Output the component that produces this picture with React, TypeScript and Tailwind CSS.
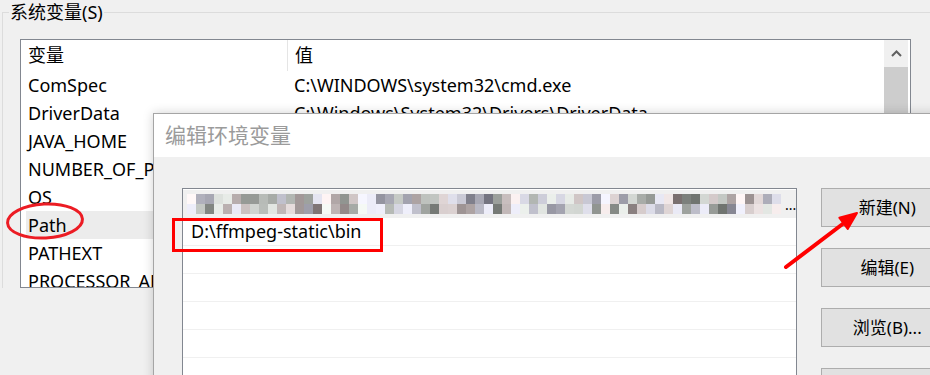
import React from "react";

// values further down are hidden behind the dialog
const vars = [
  { name: "ComSpec", value: "C:\\WINDOWS\\system32\\cmd.exe" },
  { name: "DriverData", value: "C:\\Windows\\System32\\Drivers\\DriverData" },
  { name: "JAVA_HOME", value: "" },
  { name: "NUMBER_OF_PROCESSORS", value: "" },
  { name: "OS", value: "" },
  { name: "Path", value: "" },
  { name: "PATHEXT", value: "" },
  { name: "PROCESSOR_ARCHITECTURE", value: "" },
];

// pixelated (blurred) path entry
const Mosaic = () => {
  let seed = 7;
  const rnd = () => {
    seed = (seed * 16807) % 2147483647;
    return seed / 2147483647;
  };
  const cells: { x: number; y: number; c: string }[] = [];
  for (let col = 0; col < 66; col++) {
    const gap = rnd() < 0.08;
    for (let row = 0; row < 2; row++) {
      let v = gap ? 235 + Math.floor(rnd() * 15) : 145 + Math.floor(rnd() * 95);
      if (!gap && rnd() < 0.12) v = 110 + Math.floor(rnd() * 30);
      const tint = Math.floor(rnd() * 3);
      const r = Math.min(255, v + (tint === 0 ? 10 : 0));
      const g = Math.min(255, v + (tint === 1 ? 4 : 0));
      const b = Math.min(255, v + (tint === 2 ? 12 : 0));
      cells.push({ x: col * 9, y: row * 10, c: `rgb(${r},${g},${b})` });
    }
  }
  return (
    <svg width="596" height="22" viewBox="0 0 596 22">
      {cells.map((c, i) => (
        <rect key={i} x={c.x} y={c.y + 1} width="9" height="10" fill={c.c} />
      ))}
    </svg>
  );
};

const App = () => {
  return (
    <div className="relative w-[930px] h-[375px] overflow-hidden bg-[#f0f0f0] text-black font-['Noto_Sans','Noto_Sans_CJK_SC',sans-serif]">
      <fieldset className="ml-[2px] border-l border-t border-[#dcdcdc]">
        <legend className="ml-[6px] px-px text-[18px] leading-[24px]">系统变量(S)</legend>
        <div className="mt-[15px] ml-[17px] w-[891px] h-[249px] border border-[#828790] bg-white flex pr-[2px] overflow-hidden">
          <div className="w-[863px] text-[18px]">
            <div className="h-[31px] pl-[5px] flex items-center">
              <div className="w-[262px] h-full pl-[2px] flex items-center border-r border-[#e5e5e5]">变量</div>
              <div className="pl-[7px]">值</div>
            </div>
            {vars.map((v) => (
              <div key={v.name} className="h-[28px] pl-[5px]">
                <div className={`flex h-full items-center ${v.name === "Path" ? "bg-[#ececec]" : ""}`}>
                  <div className="w-[262px] pl-[2px] whitespace-nowrap overflow-hidden">{v.name}</div>
                  <div className="pl-[6px] whitespace-nowrap">{v.value}</div>
                </div>
              </div>
            ))}
          </div>
          <div className="w-[24px] flex flex-col bg-[#f0f0f0]">
            <div className="h-[27px] flex items-center justify-center">
              <svg width="11" height="7" viewBox="0 0 11 7">
                <polyline points="1,6 5.5,1.5 10,6" fill="none" stroke="#606060" strokeWidth="2" />
              </svg>
            </div>
            <div className="h-[140px] bg-[#cdcdcd]" />
          </div>
        </div>
      </fieldset>

      {/* annotation: circle around Path */}
      <svg className="absolute left-0 top-[195px]" width="95" height="55" viewBox="0 195 95 55">
        <ellipse cx="45" cy="221" rx="37.5" ry="17" fill="none" stroke="#ec1c24" strokeWidth="3" transform="rotate(-3 45 221)" />
      </svg>

      {/* edit dialog */}
      <div className="absolute left-[153px] top-[113px] w-[800px] h-[300px] border border-[#a5a5a5] bg-[#f0f0f0] shadow-[0_0_10px_rgba(0,0,0,0.18)]">
        <div className="h-[43px] bg-white px-[11px] flex items-center text-[21px] text-[#9b9b9b]">编辑环境变量</div>
        <div className="flex pt-[31px] pl-[28px] gap-[24px]">
          <div className="w-[616px] h-[220px] border border-[#828790] bg-white pt-px text-[18px]">
            <div className="h-[28px] border-b border-[#f0f0f0] bg-[#f0f0f0] flex items-center pl-[4px]">
              <Mosaic />
              <span className="ml-[2px] text-[14px] leading-none self-end mb-[5px]">...</span>
            </div>
            <div className="h-[28px] border-b border-[#f0f0f0] flex items-center pl-[8px]">D:\ffmpeg-static\bin</div>
            {[0, 1, 2, 3, 4].map((i) => (
              <div key={i} className="h-[28px] border-b border-[#f0f0f0]" />
            ))}
          </div>
          <div className="flex flex-col gap-[21px] text-[17px]">
            {["新建(N)", "编辑(E)", "浏览(B)...", "删除(D)"].map((t) => (
              <div key={t} className="w-[132px] h-[39px] border border-[#adadad] bg-[#e1e1e1] flex items-center justify-center">
                {t}
              </div>
            ))}
          </div>
        </div>
      </div>

      {/* annotation: box around new entry */}
      <div className="absolute left-[172px] top-[218px] w-[211px] h-[34px] border-[3px] border-[#ff0000]" />

      {/* annotation: arrow to 新建 */}
      <svg className="absolute left-[775px] top-[200px]" width="95" height="80" viewBox="0 0 95 80">
        <line x1="11" y1="67" x2="69" y2="23" stroke="#ff0000" strokeWidth="4" strokeLinecap="round" />
        <polygon points="82,13 72.7,28.9 64.3,17.7" fill="#ff0000" stroke="#ff0000" strokeWidth="2" strokeLinejoin="round" />
      </svg>
    </div>
  );
};

export default App;
